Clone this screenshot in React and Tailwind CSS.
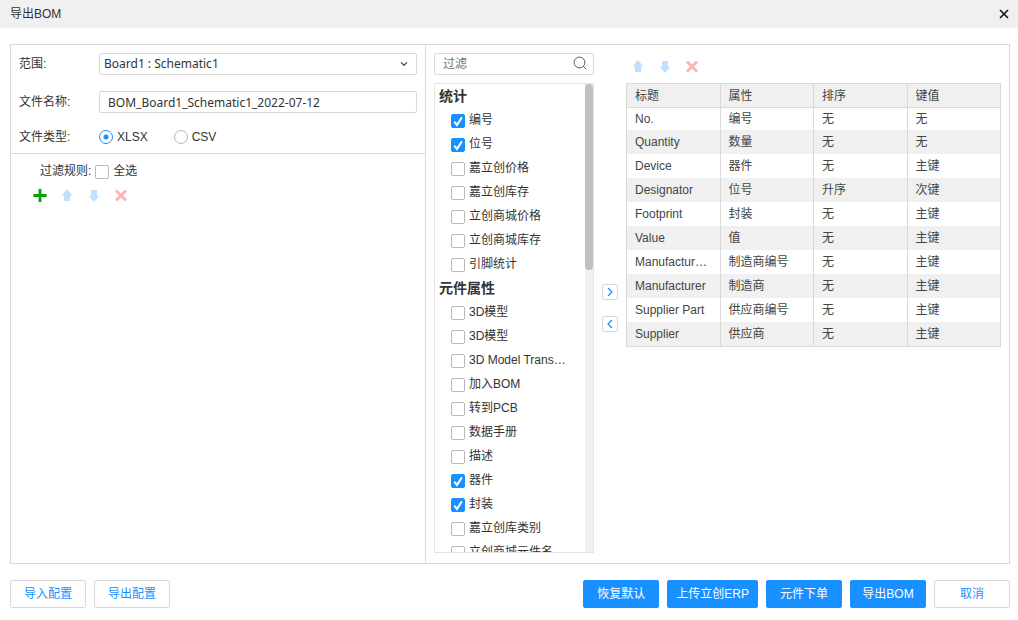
import { useState } from 'react';
import clsx from 'clsx';

const sections = [
  {
    title: '统计',
    items: [
      { name: '编号', checked: true },
      { name: '位号', checked: true },
      { name: '嘉立创价格' },
      { name: '嘉立创库存' },
      { name: '立创商城价格' },
      { name: '立创商城库存' },
      { name: '引脚统计' },
    ],
  },
  {
    title: '元件属性',
    items: [
      { name: '3D模型' },
      { name: '3D模型' },
      { name: '3D Model Transform' },
      { name: '加入BOM' },
      { name: '转到PCB' },
      { name: '数据手册' },
      { name: '描述' },
      { name: '器件', checked: true },
      { name: '封装', checked: true },
      { name: '嘉立创库类别' },
      { name: '立创商城元件名' },
    ],
  },
];

const columns = ['标题', '属性', '排序', '键值'];

const rows = [
  ['No.', '编号', '无', '无'],
  ['Quantity', '数量', '无', '无'],
  ['Device', '器件', '无', '主键'],
  ['Designator', '位号', '升序', '次键'],
  ['Footprint', '封装', '无', '主键'],
  ['Value', '值', '无', '主键'],
  ['Manufacturer Part', '制造商编号', '无', '主键'],
  ['Manufacturer', '制造商', '无', '主键'],
  ['Supplier Part', '供应商编号', '无', '主键'],
  ['Supplier', '供应商', '无', '主键'],
];

function Checkbox({ id, defaultChecked }) {
  return (
    <span className="relative mt-0.5 size-3.5 shrink-0">
      <input
        id={id}
        type="checkbox"
        defaultChecked={defaultChecked}
        className="peer block size-3.5 appearance-none rounded-xs border border-[#b8b8b8] bg-white checked:border-[#1890ff] checked:bg-[#1890ff]"
      />
      <svg viewBox="0 0 14 14" className="pointer-events-none absolute inset-0 hidden size-3.5 peer-checked:block">
        <path d="M3.2 7.6 6 11 10.8 3.4" fill="none" stroke="#fff" strokeWidth="2" />
      </svg>
    </span>
  );
}

function Radio({ id, label, defaultChecked }) {
  return (
    <div className="flex items-center gap-1">
      <input
        id={id}
        type="radio"
        name="fileType"
        defaultChecked={defaultChecked}
        className="size-3.5 appearance-none rounded-full border border-[#b8b8b8] bg-white checked:border-[#1890ff] checked:bg-[radial-gradient(circle,#1890ff_2px,#fff_3px)]"
      />
      <label htmlFor={id}>{label}</label>
    </div>
  );
}

function IconButton({ label, className, children }) {
  return (
    <button type="button" aria-label={label} className={clsx('size-4 shrink-0', className)}>
      <svg viewBox="0 0 16 16" className="size-4 fill-current">
        {children}
      </svg>
    </button>
  );
}

function OrderButtons() {
  return (
    <>
      <IconButton label="上移" className="text-[#bfe0ff]">
        <path d="M8 1 13.4 7.4H11V13H5V7.4H2.6Z" />
      </IconButton>
      <IconButton label="下移" className="text-[#bfe0ff]">
        <path d="M8 14 2.6 7.8H5V2H11V7.8H13.4Z" />
      </IconButton>
      <IconButton label="删除" className="text-[#ffb3b3]">
        <path d="M4 1.6 8 5.5 12 1.6 14 3.6 10.1 7.5 14 11.4 12 13.4 8 9.5 4 13.4 2 11.4 5.9 7.5 2 3.6Z" />
      </IconButton>
    </>
  );
}

function Button({ primary, children }) {
  return (
    <button
      type="button"
      className={clsx(
        'h-7 min-w-19 rounded-xs border px-2',
        primary ? 'border-[#1890ff] bg-[#1890ff] text-white' : 'border-[#d9d9d9] bg-white text-[#1890ff]'
      )}
    >
      {children}
    </button>
  );
}

function MoveButton({ label, d }) {
  return (
    <button type="button" aria-label={label} className="size-4 rounded-xs border border-[#d9d9d9] bg-white">
      <svg viewBox="0 0 14 14" className="size-3.5">
        <path d={d} fill="none" stroke="#1890ff" strokeWidth="1.2" />
      </svg>
    </button>
  );
}

function FieldList() {
  const [offset, setOffset] = useState(0);

  const onScroll = (e) => {
    const { scrollTop, scrollHeight, clientHeight } = e.target;
    const max = scrollHeight - clientHeight;
    setOffset(max > 0 ? (scrollTop / max) * (clientHeight - 186) : 0);
  };

  return (
    <div className="flex h-[470px] border border-[#e5e5e5]">
      <div onScroll={onScroll} className="min-w-0 flex-1 overflow-y-auto [scrollbar-width:none]">
        {sections.map((section, s) => (
          <section key={section.title}>
            <h2 className="pl-1 text-sm leading-6 font-bold">{section.title}</h2>
            <ul>
              {section.items.map((item, i) => (
                <li key={i} className="flex h-6 items-center gap-1 pl-4">
                  <Checkbox id={`field-${s}-${i}`} defaultChecked={item.checked} />
                  <label htmlFor={`field-${s}-${i}`} className="w-[97px] truncate">
                    {item.name}
                  </label>
                </li>
              ))}
            </ul>
          </section>
        ))}
      </div>
      <div className="w-2 bg-[#f0f0f0]">
        <div className="h-[186px] rounded-full bg-[#c1c1c1]" style={{ transform: `translateY(${offset}px)` }} />
      </div>
    </div>
  );
}

export default function App() {
  return (
    <div className="min-h-screen bg-white font-['Liberation_Sans','Noto_Sans_CJK_SC',sans-serif] text-xs text-[#333]">
      <header className="flex h-7 items-center justify-between bg-[#f0f0f0] pr-2 pl-2.5">
        <h1>导出BOM</h1>
        <button type="button" aria-label="关闭">
          <svg viewBox="0 0 12 12" className="size-3">
            <path d="M2 2 10 10M10 2 2 10" fill="none" stroke="#111" strokeWidth="1.6" />
          </svg>
        </button>
      </header>

      <main className="mt-4 mr-2 ml-2.5 flex border border-[#d9d9d9]">
        {/* Export settings */}
        <div className="w-[415px] shrink-0 border-r border-[#d9d9d9]">
          <div className="grid grid-cols-[80px_1fr] items-center gap-y-4 border-b border-[#d9d9d9] p-2">
            <label htmlFor="range">范围:</label>
            <div className="relative">
              <select
                id="range"
                className="block h-[22px] w-full appearance-none rounded-xs border border-[#d9d9d9] bg-white px-1 font-['Noto_Sans','Noto_Sans_CJK_SC',sans-serif]"
              >
                <option>Board1 : Schematic1</option>
              </select>
              <svg viewBox="0 0 8 8" className="pointer-events-none absolute top-[7px] right-[9px] size-2">
                <path d="M1 2.4 4 5.4 7 2.4" fill="none" stroke="#444" strokeWidth="1.3" />
              </svg>
            </div>

            <label htmlFor="fileName">文件名称:</label>
            <input
              id="fileName"
              type="text"
              defaultValue="BOM_Board1_Schematic1_2022-07-12"
              className="h-[22px] w-full rounded-xs border border-[#d9d9d9] px-2 font-['Noto_Sans','Noto_Sans_CJK_SC',sans-serif]"
            />

            <span id="fileType">文件类型:</span>
            <div role="radiogroup" aria-labelledby="fileType" className="flex gap-[26px]">
              <Radio id="xlsx" label="XLSX" defaultChecked />
              <Radio id="csv" label="CSV" />
            </div>
          </div>

          <div className="px-[21px] py-[9px]">
            <div className="flex items-center gap-1 pl-2">
              <span>过滤规则:</span>
              <Checkbox id="selectAll" />
              <label htmlFor="selectAll">全选</label>
            </div>
            <div className="flex gap-[11px] pt-[9px]">
              <IconButton label="添加" className="text-[#0a9f0a]">
                <path d="M6.6 1H9.4V6.1H14.6V8.9H9.4V14H6.6V8.9H1.4V6.1H6.6Z" />
              </IconButton>
              <OrderButtons />
            </div>
          </div>
        </div>

        {/* Field picker and chosen columns */}
        <div className="flex min-w-0 flex-1 gap-2 px-2 pt-2">
          <div className="w-40 shrink-0 pb-2.5">
            <div className="relative mb-2">
              <input
                type="text"
                aria-label="过滤"
                placeholder="过滤"
                className="block h-[22px] w-full rounded-xs border border-[#d9d9d9] px-2 placeholder:text-[#757575]"
              />
              <svg viewBox="0 0 14 14" className="pointer-events-none absolute top-[3px] right-[7px] size-3.5">
                <circle cx="6.5" cy="6.5" r="5.4" fill="none" stroke="#555" />
                <path d="M10.4 10.4 13.2 13.2" stroke="#555" />
              </svg>
            </div>
            <FieldList />
          </div>

          <div className="flex flex-col justify-center gap-4">
            <MoveButton label="添加到表格" d="M5 3 9 7 5 11" />
            <MoveButton label="从表格移除" d="M9 3 5 7 9 11" />
          </div>

          <div className="min-w-0 flex-1">
            <div className="mb-2 flex h-[22px] items-end gap-[11px] pl-1">
              <OrderButtons />
            </div>
            <table className="w-full table-fixed border-collapse border border-[#d9d9d9] text-left text-[#444]">
              <thead>
                <tr className="h-6 border-b border-[#d9d9d9] bg-[#f0f0f0]">
                  {columns.map((column) => (
                    <th key={column} className="border-r border-[#d9d9d9] px-2 py-0 font-normal">
                      {column}
                    </th>
                  ))}
                </tr>
              </thead>
              <tbody>
                {rows.map((row) => (
                  <tr key={row[0]} className="h-6 first:h-[22px] last:h-[25px] even:bg-[#f0f0f0]">
                    {row.map((cell, i) => (
                      <td key={i} className="truncate border-r border-[#d9d9d9] px-2 py-0">
                        {cell}
                      </td>
                    ))}
                  </tr>
                ))}
              </tbody>
            </table>
          </div>
        </div>
      </main>

      <footer className="flex justify-between py-4 pr-2 pl-2.5">
        <div className="flex gap-2">
          <Button>导入配置</Button>
          <Button>导出配置</Button>
        </div>
        <div className="flex gap-2">
          <Button primary>恢复默认</Button>
          <Button primary>上传立创ERP</Button>
          <Button primary>元件下单</Button>
          <Button primary>导出BOM</Button>
          <Button>取消</Button>
        </div>
      </footer>
    </div>
  );
}
